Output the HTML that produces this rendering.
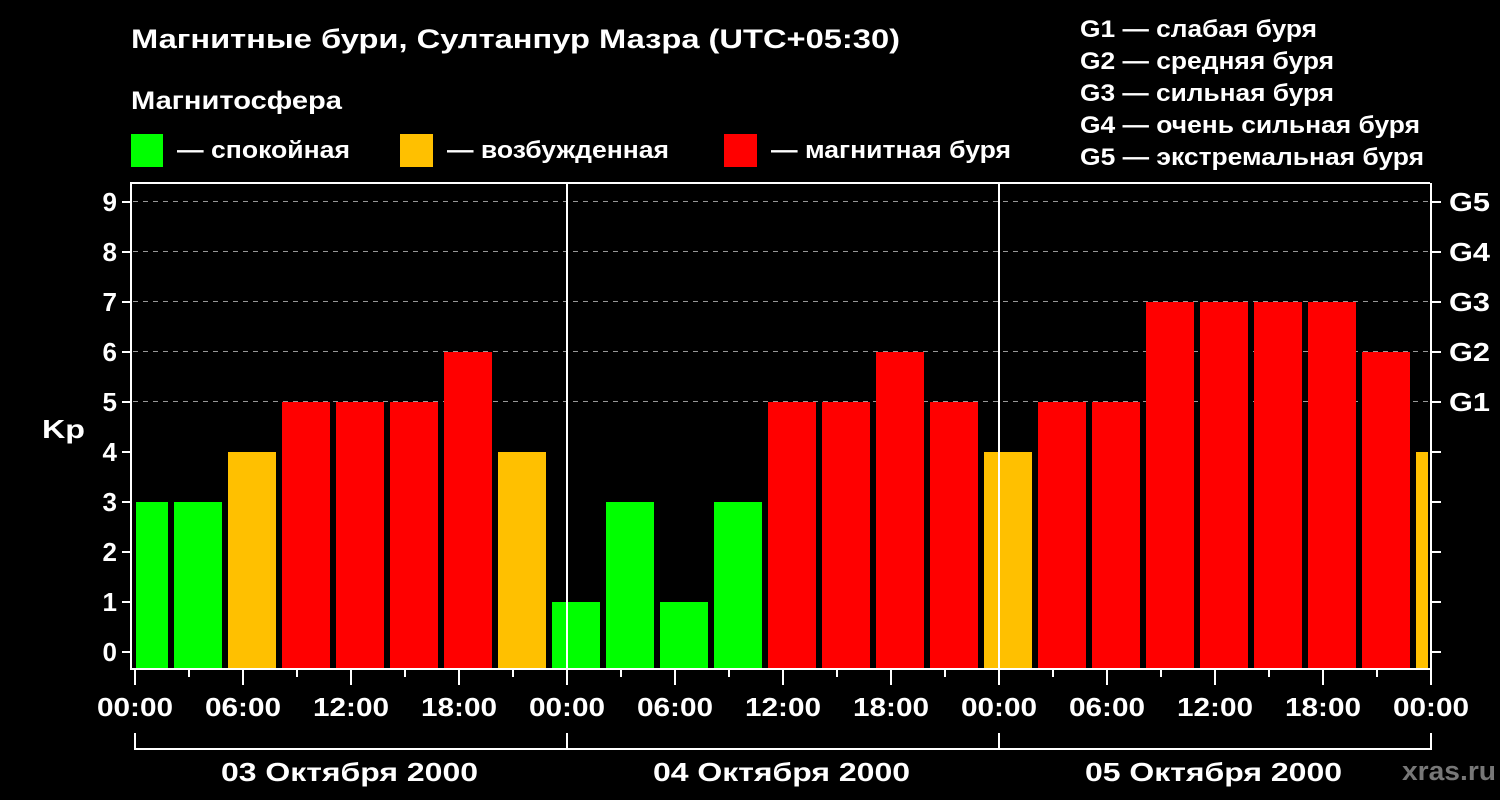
<!DOCTYPE html>
<html><head><meta charset="utf-8"><style>
html,body{margin:0;padding:0;background:#000;width:1500px;height:800px;overflow:hidden}
svg text{font-family:"Liberation Sans",Arial,sans-serif;font-weight:bold;fill:#fff}
</style></head><body>
<svg width="1500" height="800" xmlns="http://www.w3.org/2000/svg">
<rect width="1500" height="800" fill="#000"/>
<text x="131" y="48" font-size="27" textLength="769" lengthAdjust="spacingAndGlyphs">Магнитные бури, Султанпур Мазра (UTC+05:30)</text>
<text x="131" y="109" font-size="25" textLength="211" lengthAdjust="spacingAndGlyphs">Магнитосфера</text>
<rect x="131" y="134" width="32" height="33" fill="#00ff00"/>
<text x="177" y="158" font-size="24" textLength="173" lengthAdjust="spacingAndGlyphs">— спокойная</text>
<rect x="400" y="134" width="33" height="33" fill="#ffc000"/>
<text x="447" y="158" font-size="24" textLength="222" lengthAdjust="spacingAndGlyphs">— возбужденная</text>
<rect x="724" y="134" width="33" height="33" fill="#ff0000"/>
<text x="771" y="158" font-size="24" textLength="240" lengthAdjust="spacingAndGlyphs">— магнитная буря</text>
<g font-size="24">
<text x="1080" y="37" textLength="237" lengthAdjust="spacingAndGlyphs">G1 — слабая буря</text>
<text x="1080" y="69" textLength="254" lengthAdjust="spacingAndGlyphs">G2 — средняя буря</text>
<text x="1080" y="101" textLength="254" lengthAdjust="spacingAndGlyphs">G3 — сильная буря</text>
<text x="1080" y="133" textLength="340" lengthAdjust="spacingAndGlyphs">G4 — очень сильная буря</text>
<text x="1080" y="165" textLength="344" lengthAdjust="spacingAndGlyphs">G5 — экстремальная буря</text>
</g>
<g stroke="#999" stroke-width="1" stroke-dasharray="5,5">
<line x1="133" y1="201.5" x2="1430" y2="201.5"/>
<line x1="133" y1="251.5" x2="1430" y2="251.5"/>
<line x1="133" y1="301.5" x2="1430" y2="301.5"/>
<line x1="133" y1="351.5" x2="1430" y2="351.5"/>
<line x1="133" y1="401.5" x2="1430" y2="401.5"/>
</g>
<g>
<rect x="136" y="502" width="32" height="166" fill="#00ff00"/>
<rect x="174" y="502" width="48" height="166" fill="#00ff00"/>
<rect x="228" y="452" width="48" height="216" fill="#ffc000"/>
<rect x="282" y="402" width="48" height="266" fill="#ff0000"/>
<rect x="336" y="402" width="48" height="266" fill="#ff0000"/>
<rect x="390" y="402" width="48" height="266" fill="#ff0000"/>
<rect x="444" y="352" width="48" height="316" fill="#ff0000"/>
<rect x="498" y="452" width="48" height="216" fill="#ffc000"/>
<rect x="552" y="602" width="48" height="66" fill="#00ff00"/>
<rect x="606" y="502" width="48" height="166" fill="#00ff00"/>
<rect x="660" y="602" width="48" height="66" fill="#00ff00"/>
<rect x="714" y="502" width="48" height="166" fill="#00ff00"/>
<rect x="768" y="402" width="48" height="266" fill="#ff0000"/>
<rect x="822" y="402" width="48" height="266" fill="#ff0000"/>
<rect x="876" y="352" width="48" height="316" fill="#ff0000"/>
<rect x="930" y="402" width="48" height="266" fill="#ff0000"/>
<rect x="984" y="452" width="48" height="216" fill="#ffc000"/>
<rect x="1038" y="402" width="48" height="266" fill="#ff0000"/>
<rect x="1092" y="402" width="48" height="266" fill="#ff0000"/>
<rect x="1146" y="302" width="48" height="366" fill="#ff0000"/>
<rect x="1200" y="302" width="48" height="366" fill="#ff0000"/>
<rect x="1254" y="302" width="48" height="366" fill="#ff0000"/>
<rect x="1308" y="302" width="48" height="366" fill="#ff0000"/>
<rect x="1362" y="352" width="48" height="316" fill="#ff0000"/>
<rect x="1416" y="452" width="12" height="216" fill="#ffc000"/>
</g>
<g stroke="#fff" stroke-width="2" fill="none">
<path d="M131 668 V183 H1430"/>
<line x1="130" y1="669" x2="1432" y2="669"/>
<line x1="567" y1="183" x2="567" y2="668"/>
<line x1="999" y1="183" x2="999" y2="668"/>
<line x1="1431" y1="183" x2="1431" y2="669"/>
<path d="M122 202H131M122 252H131M122 302H131M122 352H131M122 402H131M122 452H131M122 502H131M122 552H131M122 602H131M122 652H131"/>
<path d="M1431 202H1441M1431 252H1441M1431 302H1441M1431 352H1441M1431 402H1441M1431 452H1441M1431 502H1441M1431 552H1441M1431 602H1441M1431 652H1441"/>
<path d="M135 669V685M567 669V685M999 669V685M1431 669V685M243 669V685M351 669V685M459 669V685M675 669V685M783 669V685M891 669V685M1107 669V685M1215 669V685M1323 669V685"/>
<path d="M189 669V677M297 669V677M405 669V677M513 669V677M621 669V677M729 669V677M837 669V677M945 669V677M1053 669V677M1161 669V677M1269 669V677M1377 669V677"/>
<path d="M135 733V749H1431V733M567 733V749M999 733V749"/>
</g>
<g font-size="26" text-anchor="end">
<text x="117" y="211">9</text><text x="117" y="261">8</text><text x="117" y="311">7</text>
<text x="117" y="361">6</text><text x="117" y="411">5</text><text x="117" y="461">4</text>
<text x="117" y="511">3</text><text x="117" y="561">2</text><text x="117" y="611">1</text>
<text x="117" y="661">0</text>
</g>
<text x="42" y="438" font-size="26" textLength="43" lengthAdjust="spacingAndGlyphs">Kp</text>
<g font-size="26">
<text x="1449" y="211" textLength="41" lengthAdjust="spacingAndGlyphs">G5</text>
<text x="1449" y="261" textLength="41" lengthAdjust="spacingAndGlyphs">G4</text>
<text x="1449" y="311" textLength="41" lengthAdjust="spacingAndGlyphs">G3</text>
<text x="1449" y="361" textLength="41" lengthAdjust="spacingAndGlyphs">G2</text>
<text x="1449" y="411" textLength="41" lengthAdjust="spacingAndGlyphs">G1</text>
</g>
<g font-size="26">
<text x="97" y="716" textLength="76" lengthAdjust="spacingAndGlyphs">00:00</text>
<text x="205" y="716" textLength="76" lengthAdjust="spacingAndGlyphs">06:00</text>
<text x="313" y="716" textLength="76" lengthAdjust="spacingAndGlyphs">12:00</text>
<text x="421" y="716" textLength="76" lengthAdjust="spacingAndGlyphs">18:00</text>
<text x="529" y="716" textLength="76" lengthAdjust="spacingAndGlyphs">00:00</text>
<text x="637" y="716" textLength="76" lengthAdjust="spacingAndGlyphs">06:00</text>
<text x="745" y="716" textLength="76" lengthAdjust="spacingAndGlyphs">12:00</text>
<text x="853" y="716" textLength="76" lengthAdjust="spacingAndGlyphs">18:00</text>
<text x="961" y="716" textLength="76" lengthAdjust="spacingAndGlyphs">00:00</text>
<text x="1069" y="716" textLength="76" lengthAdjust="spacingAndGlyphs">06:00</text>
<text x="1177" y="716" textLength="76" lengthAdjust="spacingAndGlyphs">12:00</text>
<text x="1285" y="716" textLength="76" lengthAdjust="spacingAndGlyphs">18:00</text>
<text x="1393" y="716" textLength="76" lengthAdjust="spacingAndGlyphs">00:00</text>
<text x="221" y="781" textLength="257" lengthAdjust="spacingAndGlyphs">03 Октября 2000</text>
<text x="653" y="781" textLength="257" lengthAdjust="spacingAndGlyphs">04 Октября 2000</text>
<text x="1085" y="781" textLength="257" lengthAdjust="spacingAndGlyphs">05 Октября 2000</text>
</g>
<text x="1402" y="780" font-size="27" textLength="94" lengthAdjust="spacingAndGlyphs" style="fill:#777">xras.ru</text>
</svg>
</body></html>
